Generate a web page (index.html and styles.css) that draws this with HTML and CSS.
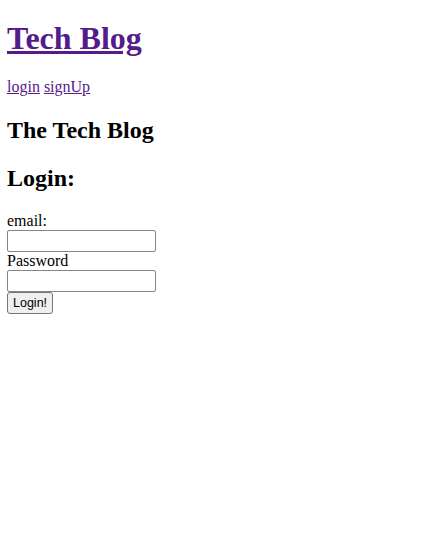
FILE: index.html
```html
<!DOCTYPE html>
<html>
<head>
<meta charset="utf-8">
<title>Tech Blog</title>
<link rel="stylesheet" href="styles.css">
</head>
<body class="page">
<header>
  <h1 class="site-title"><a class="link" href="#">Tech Blog</a></h1>
  <nav class="nav"><a class="link" href="#">login</a> <a class="link" href="#">signUp</a></nav>
</header>
<main>
  <h2 class="heading">The Tech Blog</h2>
  <h2 class="heading">Login:</h2>
  <form class="login-form">
    <label class="label" for="email">email:</label><br>
    <input class="field" id="email" type="text"><br>
    <label class="label" for="password">Password</label><br>
    <input class="field" id="password" type="password"><br>
    <button class="btn" type="button">Login!</button>
  </form>
</main>
</body>
</html>
```
FILE: styles.css
```css
html { background: #fff; }
.page {
  margin: 0 7px 8px;
  font-family: "Liberation Serif", "Times New Roman", serif;
  font-size: 16px;
  color: #000;
}
.site-title {
  font-size: 32px;
  font-weight: bold;
  margin: 20px 0 21.44px;
}
.link { color: #551a8b; text-decoration: underline; }
.nav { margin: 0; }
.heading {
  font-size: 24px;
  font-weight: bold;
  line-height: 28px;
  margin: 19.92px 0;
}
.login-form { margin: 0; }
.field {
  box-sizing: border-box;
  width: 149px;
  height: 22px;
  margin: 0;
  padding: 1px 2px;
  border: 1px solid #858585;
  border-radius: 2px;
  background: #fff;
  font-family: "Liberation Sans", Arial, sans-serif;
  font-size: 13.33px;
  vertical-align: bottom;
}
.btn {
  box-sizing: border-box;
  height: 22px;
  margin: 0;
  padding: 1px 5px;
  border: 1px solid #767676;
  border-radius: 3px;
  background: #efefef;
  color: #000;
  font-family: "Liberation Sans", Arial, sans-serif;
  font-size: 12.5px;
  vertical-align: bottom;
}
```
